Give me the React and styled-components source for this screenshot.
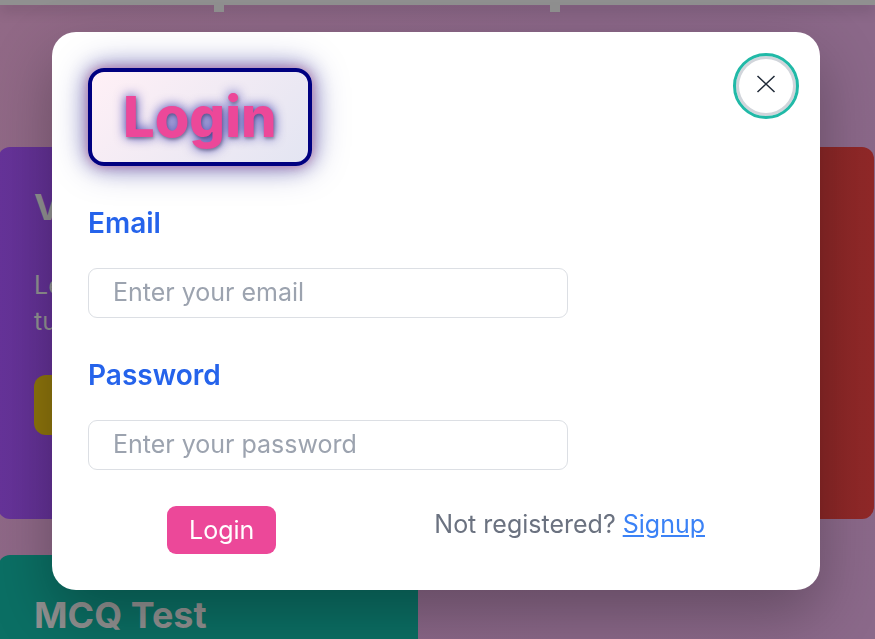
import React from "react";
import styled, { createGlobalStyle } from "styled-components";

const GlobalStyle = createGlobalStyle`
  *, *::before, *::after { box-sizing: border-box; }
  html, body { margin: 0; height: 100%; overflow: hidden; }
  body {
    font-family: "Inter", "Open Sans", sans-serif;
    font-size: 25px;
    font-weight: 400;
    line-height: 36px;
    background: #8c6787;
  }
  h1, h2, p { margin: 0; }
  button, input { font: inherit; }
`;

const Page = styled.div`
  height: 100vh;
  overflow: hidden;
  background: linear-gradient(115deg, #916986 0%, #8b6788 50%, #8b698a 100%);
`;

const NavEdge = styled.header`
  height: 5px;
  background: #909090;
  box-shadow: 0 4px 14px rgba(0, 0, 0, 0.25);
  display: flex;
  gap: 326px;
  padding-left: 214px;
`;

const NavTab = styled.span`
  width: 10px;
  height: 12px;
  flex: none;
  background: #909090;
`;

const CardGrid = styled.main`
  display: grid;
  grid-template-columns: 1fr 1fr;
  gap: 36px;
  margin: 142px 1px 0 -2px;
`;

const Card = styled.article`
  height: 372px;
  padding: 36px;
  border-radius: 12px;
  background: ${(p) => p.$fill};
  color: #929292;
  display: flex;
  flex-direction: column;
  align-items: flex-start;
`;

const CardTitle = styled.h2`
  font-size: 36px;
  font-weight: 700;
  line-height: 48px;
  margin-bottom: 36px;
`;

const CardButton = styled.button`
  margin-top: 36px;
  width: 150px;
  height: 60px;
  border: 0;
  border-radius: 12px;
  background: #8d740c;
`;

const Overlay = styled.div`
  position: fixed;
  inset: 0;
  padding: 32px 55px 0 52px;
`;

const Dialog = styled.section`
  padding: 36px;
  border-radius: 24px;
  background: #fff;
  box-shadow: 0 24px 60px rgba(0, 0, 0, 0.28);
`;

const Heading = styled.h1`
  width: fit-content;
  height: 98px;
  padding: 0 31px;
  display: flex;
  align-items: center;
  border: 4px solid #000080;
  border-radius: 16px;
  background: linear-gradient(135deg, #fff0f6, #e3e5f2);
  box-shadow: 0 0 10px rgba(215, 110, 150, 0.6), 0 0 20px rgba(0, 0, 128, 0.45),
    0 0 36px rgba(0, 0, 128, 0.35);
  color: #ec4899;
  font-size: 56px;
  font-weight: 800;
  line-height: 56px;
  text-shadow: 1px 2px 3px rgba(0, 0, 0, 0.25), 0 0 12px rgba(0, 0, 150, 0.8);
`;

const Field = styled.div`
  display: flex;
  flex-direction: column;
  align-items: flex-start;
  margin-top: 36px;
`;

const Label = styled.label`
  margin-bottom: 24px;
  color: #2563eb;
  font-size: 28px;
  font-weight: 600;
  line-height: 42px;
`;

const TextInput = styled.input`
  width: 480px;
  max-width: 100%;
  height: 50px;
  padding: 0 24px 2px;
  border: 1px solid #dcdfe4;
  border-radius: 9px;
  background: #fff;
  color: #1f2937;
  outline: none;
  &::placeholder { color: #9ca3af; opacity: 1; }
`;

const Actions = styled.div`
  display: flex;
  justify-content: space-around;
  align-items: flex-start;
  margin-top: 36px;
`;

const SubmitButton = styled.button`
  height: 48px;
  padding: 0 22px;
  border: 0;
  border-radius: 9px;
  background: #ec4899;
  color: #fff;
`;

const Hint = styled.p`
  color: #6b7280;
  white-space: nowrap;
`;

const SignupLink = styled.a`
  color: #3b82f6;
  text-decoration: underline;
`;

const CloseButton = styled.button`
  position: absolute;
  top: 53px;
  right: 76px;
  width: 66px;
  height: 66px;
  padding: 0 0 4px;
  display: grid;
  place-items: center;
  border: 3px solid #21b9a7;
  border-radius: 50%;
  background: #fff;
  box-shadow: inset 0 0 0 3px #d1d5db;
`;

const CloseIcon = () => (
  <svg width="20" height="18" viewBox="0 0 20 18" aria-hidden="true">
    <path d="M1.5 1L18.5 17M18.5 1L1.5 17" stroke="#1f2937" strokeWidth="1.5" fill="none" />
  </svg>
);

export default function App() {
  return (
    <>
      <GlobalStyle />
      <Page>
        <NavEdge>
          <NavTab />
          <NavTab />
        </NavEdge>
        <CardGrid>
          <Card $fill="linear-gradient(90deg, #663399, #4f247d)">
            <CardTitle>V</CardTitle>
            <p>Le</p>
            <p>tu</p>
            <CardButton type="button" aria-label="Open" />
          </Card>
          <Card $fill="linear-gradient(90deg, #6b2020, #902828)" />
          <Card $fill="#0b6f64">
            <CardTitle>MCQ Test</CardTitle>
          </Card>
        </CardGrid>
      </Page>
      <Overlay>
        <Dialog role="dialog" aria-labelledby="login-title">
          <form onSubmit={(e) => e.preventDefault()}>
            <Heading id="login-title">Login</Heading>
            <Field>
              <Label htmlFor="email">Email</Label>
              <TextInput id="email" type="email" placeholder="Enter your email" />
            </Field>
            <Field>
              <Label htmlFor="password">Password</Label>
              <TextInput id="password" type="password" placeholder="Enter your password" />
            </Field>
            <Actions>
              <SubmitButton type="submit">Login</SubmitButton>
              <Hint>
                Not registered? <SignupLink href="#signup">Signup</SignupLink>
              </Hint>
            </Actions>
          </form>
          <CloseButton type="button" aria-label="Close">
            <CloseIcon />
          </CloseButton>
        </Dialog>
      </Overlay>
    </>
  );
}
